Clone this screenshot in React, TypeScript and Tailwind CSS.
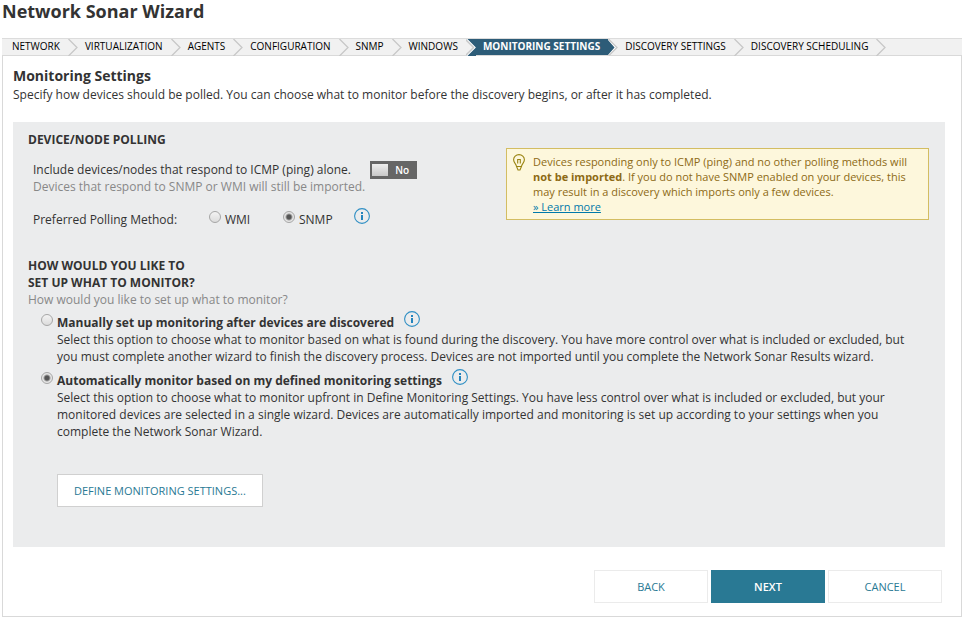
/**
 * Network Sonar Wizard - Monitoring Settings step.
 */
import { useState } from 'react';
import clsx from 'clsx';

type PollingMethod = 'wmi' | 'snmp';
type SetupMode = 'manual' | 'auto';

const STEPS = [
  'Network',
  'Virtualization',
  'Agents',
  'Configuration',
  'SNMP',
  'Windows',
  'Monitoring Settings',
  'Discovery Settings',
  'Discovery Scheduling',
];
const ACTIVE_STEP = 6;

function StepArrow({ index }: { index: number }) {
  const before = index === ACTIVE_STEP - 1;
  const active = index === ACTIVE_STEP;
  return (
    <svg width="10" height="17" viewBox="0 0 10 17" fill="none" strokeWidth="1.3" className="shrink-0" aria-hidden="true">
      {before && <path d="M0 0h10v17H0z" fill="#2d5c78" />}
      {before && <path d="M0 0l8 8.5L0 17z" fill="#f1f1f1" />}
      {active && <path d="M0 0l7 8.5L0 17z" fill="#2d5c78" />}
      {before && <path d="M0.5 0l8.500 8.500L0.500 17" stroke="#fff" />}
      {active && <path d="M0 0l7.500 8.500L0 17" stroke="#fff" />}
      <path d={before ? 'M-1 0l8.500 8.500L-1 17' : 'M0.500 0l8.500 8.500L0.500 17'} stroke="#c8c8c8" />
    </svg>
  );
}

function InfoButton({ label }: { label: string }) {
  return (
    <button type="button" aria-label={label} className="block h-4 w-4 shrink-0">
      <svg width="16" height="16" viewBox="0 0 16 16" fill="none">
        <circle cx="8" cy="8" r="7.4" stroke="#2f8fc4" strokeWidth="1.1" />
        <path d="M7 4h2v2H7zM7 7h2v5H7z" fill="#2384bd" />
      </svg>
    </button>
  );
}

function Radio({ className, ...props }: React.InputHTMLAttributes<HTMLInputElement>) {
  return (
    <input
      type="radio"
      {...props}
      className={clsx(
        'block h-3 w-3 shrink-0 appearance-none rounded-full border border-[#a6a6a6] bg-linear-to-b from-[#f3f3f3] to-[#dcdcdc] checked:bg-[radial-gradient(circle,#555_0,#555_2px,#e6e6e6_4px)]',
        className,
      )}
    />
  );
}

function BulbIcon() {
  return (
    <svg width="12" height="17" viewBox="0 0 12 17" fill="none" stroke="#9a8412" strokeWidth="1.1" className="shrink-0" aria-hidden="true">
      <path d="M3.5 12.5C3.5 10 .6 9 .6 5.800A5.400 5.200 0 0 1 11.400 5.800C11.400 9 8.500 10 8.500 12.500L7 16H5z" />
      <path d="M4.700 9.500V5.500h2.600v4M3.500 12.500h5" />
    </svg>
  );
}

export default function App() {
  const [includePing, setIncludePing] = useState(false);
  const [method, setMethod] = useState<PollingMethod>('snmp');
  const [mode, setMode] = useState<SetupMode>('auto');

  return (
    <div className="min-h-screen bg-white pr-[5px] pb-2 pl-0.5 font-['Open_Sans',sans-serif] text-[12px] leading-[17px] text-[#333]">
      <h1 className="pb-4 text-[18px] leading-[22px] font-bold">Network Sonar Wizard</h1>

      <nav aria-label="Wizard steps">
        <ol className="flex h-[17px] border-t border-[#dcdcdc] bg-[#f1f1f1] pl-[3px] text-[10px] leading-[14px] text-black uppercase">
          {STEPS.map((step, i) => (
            <li key={step} aria-current={i === ACTIVE_STEP ? 'step' : undefined} className="flex">
              <span
                className={clsx(
                  'pr-2 whitespace-nowrap',
                  i === ACTIVE_STEP ? 'bg-[#2d5c78] pl-[7px] font-bold text-white' : 'pl-[7px]',
                )}
              >
                {step}
              </span>
              <StepArrow index={i} />
            </li>
          ))}
        </ol>
      </nav>

      <main className="border border-[#d9d9d9] pt-2.5 pr-4 pb-[13px] pl-2.5">
        <h2 className="text-[14px] leading-5 font-bold">Monitoring Settings</h2>
        <p>Specify how devices should be polled. You can choose what to monitor before the discovery begins, or after it has completed.</p>

        <div className="mt-[19px] bg-[#ebeced] px-[15px] pt-2.5 pb-10">
          <section>
            <h3 className="leading-4 font-bold uppercase">Device/Node Polling</h3>
            <div className="flex items-start justify-between">
              <div className="pt-[13px] pl-[5px]">
                <div className="flex">
                  <div>
                    <p id="ping-label">Include devices/nodes that respond to ICMP (ping) alone.</p>
                    <p className="text-[#888]">Devices that respond to SNMP or WMI will still be imported.</p>
                  </div>
                  <button
                    type="button"
                    role="switch"
                    aria-checked={includePing}
                    aria-labelledby="ping-label"
                    onClick={() => setIncludePing(!includePing)}
                    className="ml-[5px] flex h-[18px] w-[47px] items-center bg-[#666] pr-px pl-0.5 text-[10px] font-semibold text-white"
                  >
                    <span className={clsx('h-3 w-4 bg-linear-to-b from-[#eee] to-[#c8c8c8]', includePing && 'order-2')} />
                    <span className="flex-1 text-center">{includePing ? 'Yes' : 'No'}</span>
                  </button>
                </div>
                <fieldset className="mt-[13px] flex items-start">
                  <legend className="float-left w-44 pt-[3px]">Preferred Polling Method:</legend>
                  <label className="flex w-[74px] gap-1 pt-[3px]">
                    <Radio name="method" checked={method === 'wmi'} onChange={() => setMethod('wmi')} />
                    WMI
                  </label>
                  <label className="flex w-[71px] gap-1 pt-[3px]">
                    <Radio name="method" checked={method === 'snmp'} onChange={() => setMethod('snmp')} />
                    SNMP
                  </label>
                  <InfoButton label="About polling methods" />
                </fieldset>
              </div>

              <aside className="mr-px flex w-[423px] border border-[#d3bd62] bg-[#fdf7dc] py-[5px] pl-1.5 text-[11px] leading-[15px] text-[#8d6a14]">
                <BulbIcon />
                <p className="pl-2">
                  Devices responding only to ICMP (ping) and no other polling methods will <b>not be imported</b>. If you do not have
                  SNMP enabled on your devices, this may result in a discovery which imports only a few devices.
                  <br />
                  <a href="#learn-more" className="text-[#0079aa] underline">
                    » Learn more
                  </a>
                </p>
              </aside>
            </div>
          </section>

          <section className="mt-[29px]">
            <h3 className="font-bold uppercase">
              How would you like to
              <br />
              set up what to monitor?
            </h3>
            <p className="text-[#888]">How would you like to set up what to monitor?</p>

            <div className="flex flex-col gap-1 pt-[3px] pr-5 pl-[13px]">
              <div className="flex gap-1">
                <Radio id="mode-manual" name="mode" className="mt-[3px]" checked={mode === 'manual'} onChange={() => setMode('manual')} />
                <div>
                  <div className="flex gap-2.5">
                    <label htmlFor="mode-manual" className="pt-[3px] font-bold">
                      Manually set up monitoring after devices are discovered
                    </label>
                    <InfoButton label="About manual setup" />
                  </div>
                  <p>
                    Select this option to choose what to monitor based on what is found during the discovery. You have more control over
                    what is included or excluded, but you must complete another wizard to finish the discovery process. Devices are not
                    imported until you complete the Network Sonar Results wizard.
                  </p>
                </div>
              </div>

              <div className="flex gap-1">
                <Radio id="mode-auto" name="mode" className="mt-[3px]" checked={mode === 'auto'} onChange={() => setMode('auto')} />
                <div>
                  <div className="flex gap-2.5">
                    <label htmlFor="mode-auto" className="pt-[3px] font-bold">
                      Automatically monitor based on my defined monitoring settings
                    </label>
                    <InfoButton label="About automatic setup" />
                  </div>
                  <p>
                    Select this option to choose what to monitor upfront in Define Monitoring Settings. You have less control over what
                    is included or excluded, but your monitored devices are selected in a single wizard. Devices are automatically
                    imported and monitoring is set up according to your settings when you complete the Network Sonar Wizard.
                  </p>
                  <button type="button" className="mt-[34px] h-[33px] border border-[#d0d0d0] bg-white px-4 text-[11px] text-[#297994] uppercase">
                    Define Monitoring Settings...
                  </button>
                </div>
              </div>
            </div>
          </section>
        </div>

        <div className="mt-[23px] mr-[3px] flex justify-end gap-[3px] text-[11px] text-[#297994]">
          <button type="button" className="h-[33px] w-[114px] border border-[#ebebeb] bg-white">
            BACK
          </button>
          <button type="button" className="h-[33px] w-[114px] bg-[#297994] font-semibold text-white">
            NEXT
          </button>
          <button type="button" className="h-[33px] w-[114px] border border-[#ebebeb] bg-white">
            CANCEL
          </button>
        </div>
      </main>
    </div>
  );
}
